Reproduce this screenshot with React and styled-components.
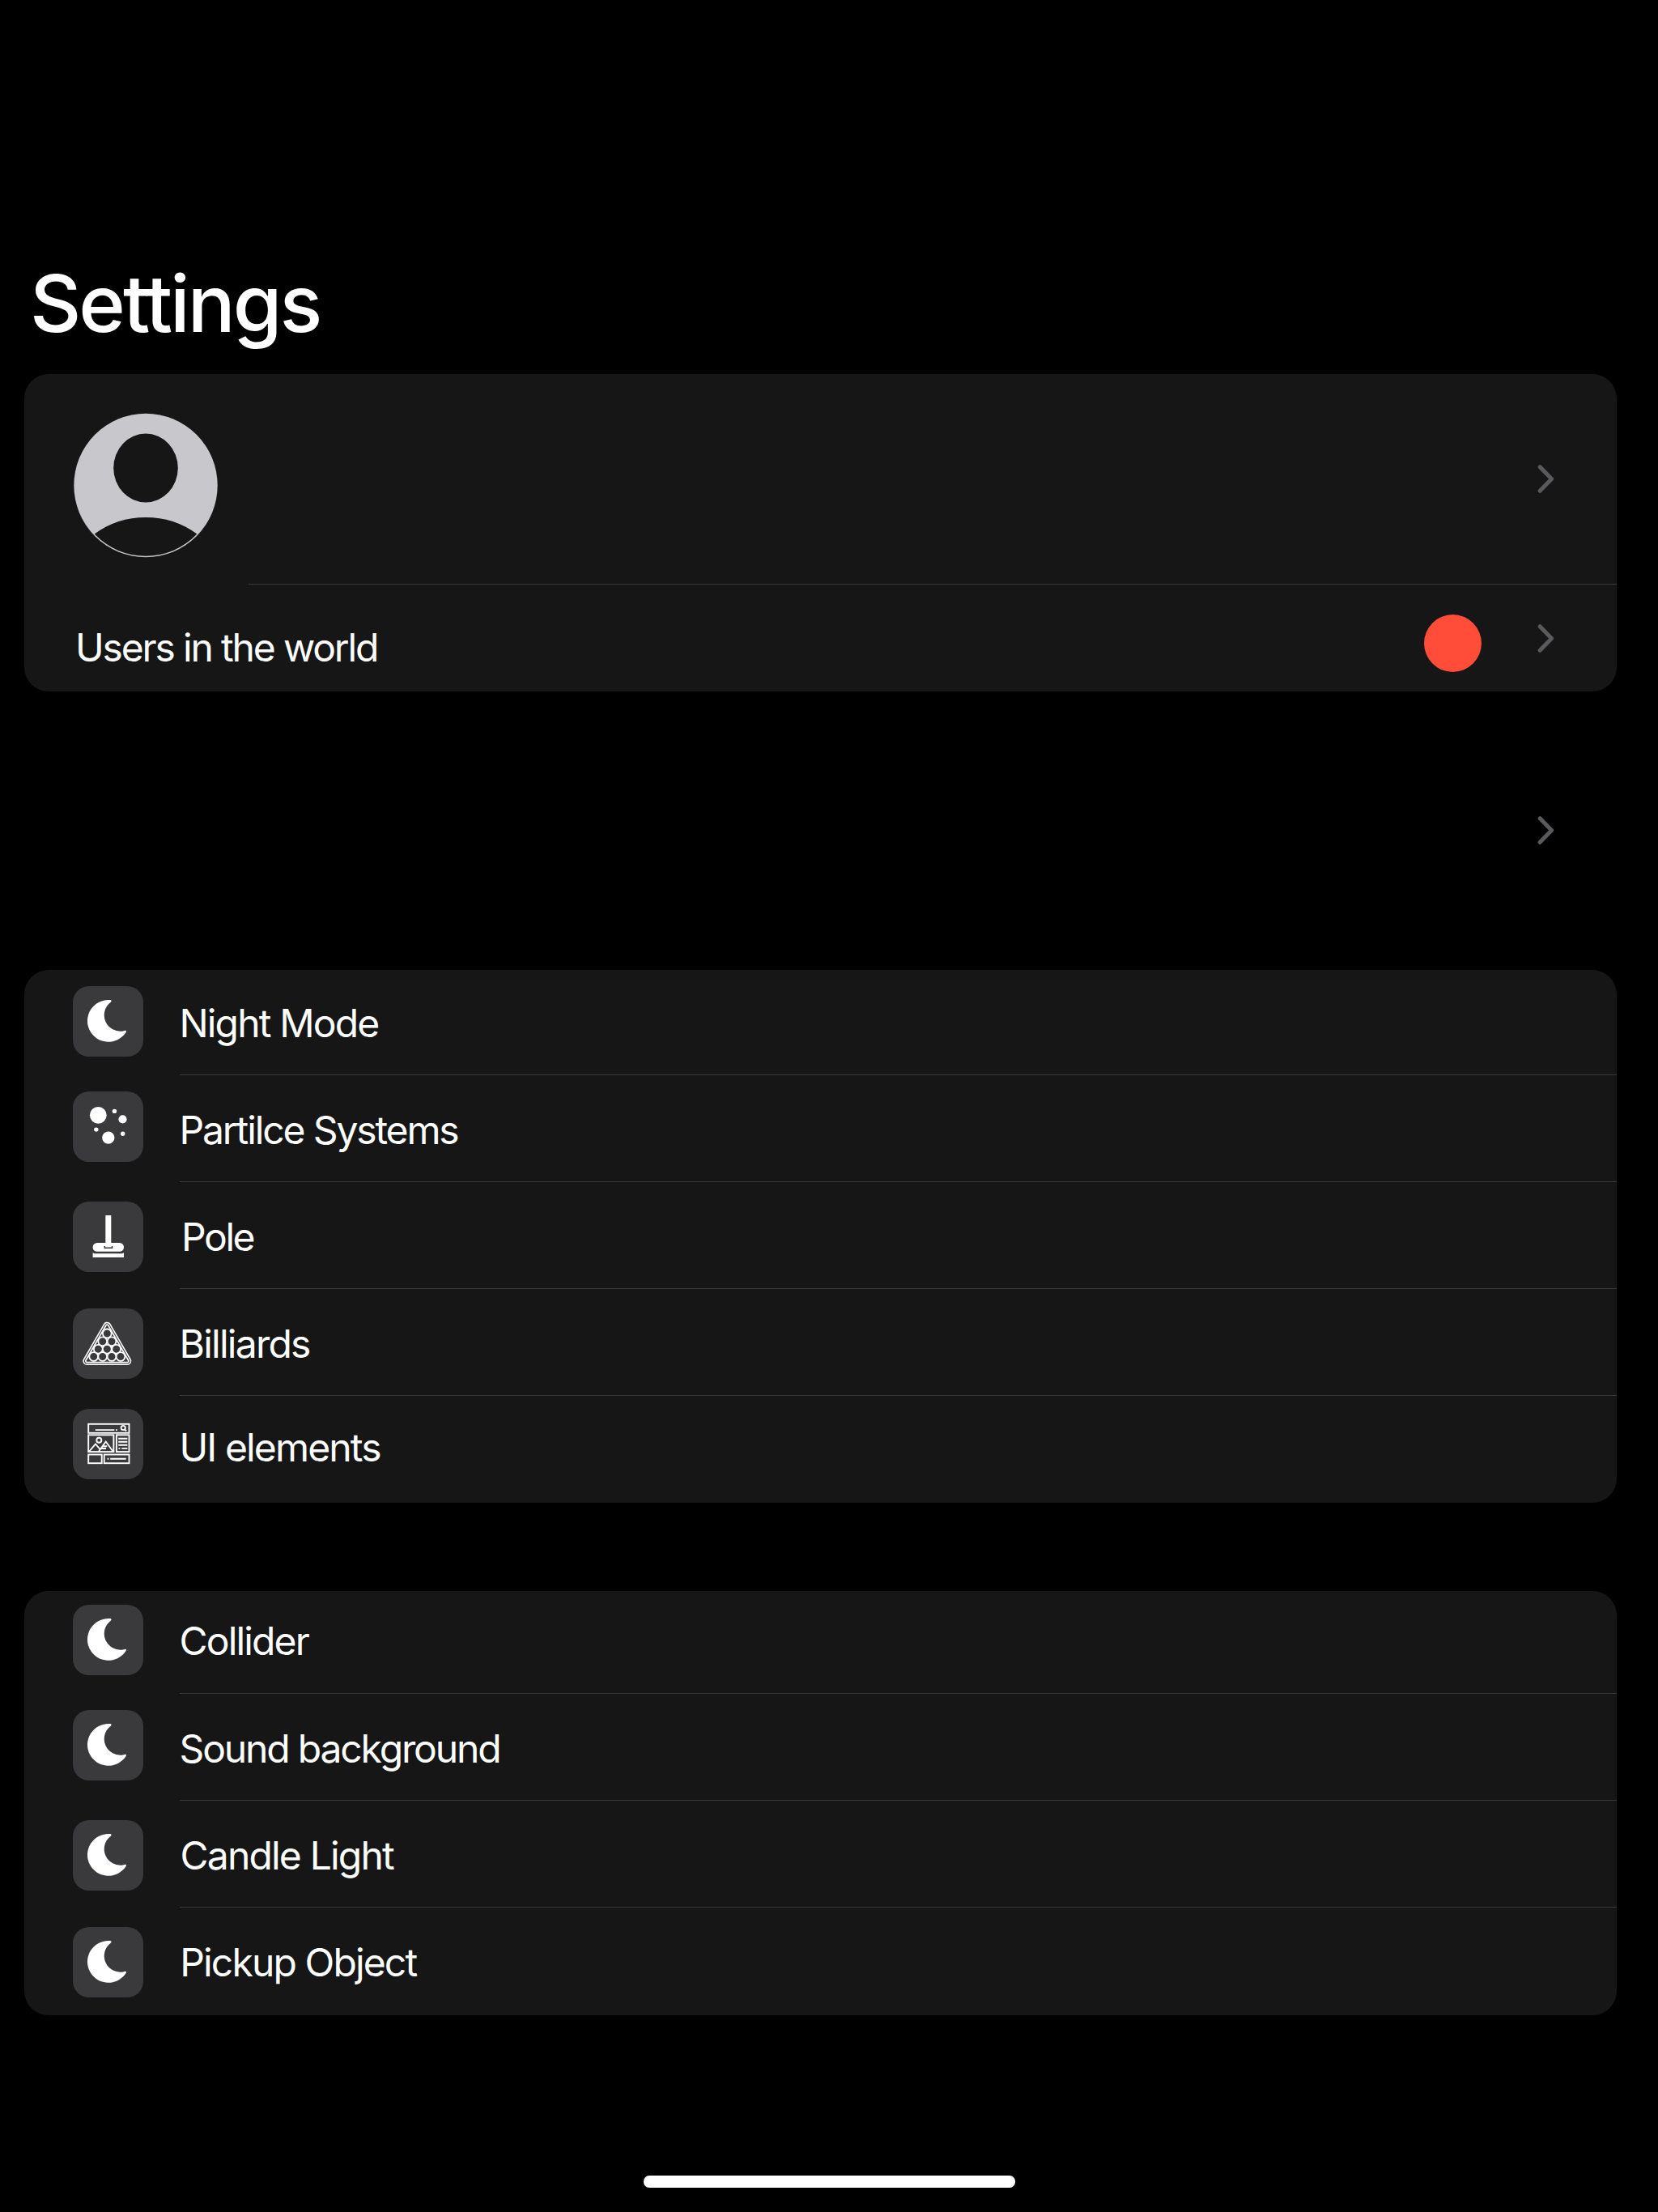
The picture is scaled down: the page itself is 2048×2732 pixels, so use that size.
import React from "react";
import styled, { createGlobalStyle } from "styled-components";

const colors = {
  page: "#000000",
  card: "#161616",
  tile: "#3a3a3c",
  divider: "#3a3a3b",
  chevron: "#5a5a5e",
  avatar: "#c8c7cc",
  badge: "#ff4d3a",
};

const GlobalStyle = createGlobalStyle`
  *, *::before, *::after { box-sizing: border-box; }
  body {
    margin: 0;
    background: ${colors.page};
    color: #ffffff;
    font-family: Inter, "Liberation Sans", sans-serif;
  }
`;

const Page = styled.main`
  width: 2048px;
  height: 2732px;
  padding: 320px 51px 30px 30px;
  display: flex;
  flex-direction: column;
  overflow: hidden;
  background: ${colors.page};
`;

const Title = styled.h1`
  margin: 0 0 22px;
  padding-left: 7px;
  height: 120px;
  font-size: 98px;
  line-height: 109px;
  font-weight: 530;
  letter-spacing: -2.95px;
`;

const Card = styled.section`
  flex: none;
  display: flex;
  flex-direction: column;
  border-radius: 30px;
  background: ${colors.card};
  margin-bottom: ${(p) => p.$after || 0}px;
`;

const ProfileRow = styled.div`
  display: flex;
  height: 260px;
`;

const AvatarSlot = styled.div`
  width: 277px;
  padding: 48px 0 0 61px;
`;

const ProfileBody = styled.div`
  flex: 1;
  display: flex;
  justify-content: flex-end;
  padding: 110px 72px 0 0;
  border-bottom: 1px solid ${colors.divider};
`;

const UsersRow = styled.div`
  display: flex;
  align-items: flex-start;
  height: 132px;
  padding: 37px 72px 0 63px;
`;

const UsersLabel = styled.span`
  flex: 1;
  padding-top: 11px;
  font-size: 48px;
  line-height: 60px;
  letter-spacing: -2.16px;
`;

const Badge = styled.span`
  width: 71px;
  height: 71px;
  margin-right: 64px;
  border-radius: 50%;
  background: ${colors.badge};
`;

const ChevronSlot = styled.span`
  display: flex;
  width: 31px;
  height: 39px;
  padding-left: 5px;
  margin-top: ${(p) => p.$top || 0}px;
`;

const LinkRow = styled.div`
  flex: none;
  display: flex;
  justify-content: flex-end;
  height: 344px;
  padding: 152px 72px 0 0;
`;

const Item = styled.div`
  display: flex;
  height: ${(p) => p.$height}px;
  padding-left: 60px;
`;

const Tile = styled.span`
  flex: none;
  width: 87px;
  height: 87px;
  margin: ${(p) => p.$top}px 45px 0 0;
  border-radius: 20px;
  background: ${colors.tile};
`;

const ItemBody = styled.div`
  flex: 1;
  padding-top: ${(p) => p.$top}px;
  border-bottom: ${(p) => (p.$last ? "none" : `1px solid ${colors.divider}`)};
`;

const ItemLabel = styled.span`
  display: block;
  margin-left: ${(p) => p.$shift}px;
  font-size: 48px;
  line-height: 60px;
  letter-spacing: ${(p) => p.$tracking}px;
  white-space: nowrap;
`;

const HomeArea = styled.footer`
  flex: 1;
  display: flex;
  align-items: flex-end;
  padding-left: 765px;
`;

const HomeBar = styled.div`
  width: 459px;
  height: 15px;
  border-radius: 7px;
  background: #ffffff;
`;

function Chevron({ top }) {
  return (
    <ChevronSlot $top={top}>
      <svg width="22" height="39" viewBox="0 0 22 39" fill="none">
        <path
          d="M3.2 4.7 17.6 19.5 3.2 34.3"
          stroke={colors.chevron}
          strokeWidth="5"
          strokeLinecap="round"
          strokeLinejoin="round"
        />
      </svg>
    </ChevronSlot>
  );
}

function Avatar() {
  return (
    <svg width="178" height="179" viewBox="0 0 178 179">
      <circle cx="89" cy="89.5" r="88.7" fill={colors.avatar} />
      <ellipse cx="89" cy="68" rx="39.8" ry="42.5" fill={colors.card} />
      <path
        d="M25.7 149.6C44 135.5 66 129 89 129s45 6.5 63.3 20.6A87.3 87.3 0 0 1 25.7 149.6Z"
        fill={colors.card}
      />
    </svg>
  );
}

const MoonIcon = () => (
  <path
    fill="#fff"
    d="M44.8 17C47.6 16.9 48.6 18 46.5 20A19.9 19.9 0 0 0 62 55.4C65.2 54.3 66.6 54.2 65.6 57A25.9 25.9 0 1 1 44.8 17Z"
  />
);

const ParticlesIcon = () => (
  <g fill="#fff">
    <circle cx="31.3" cy="29.3" r="10.4" />
    <circle cx="51.4" cy="24.4" r="2.7" />
    <circle cx="61.5" cy="34.4" r="5.1" />
    <circle cx="28.8" cy="47.1" r="2.7" />
    <circle cx="43.8" cy="57.1" r="7.7" />
    <circle cx="61.7" cy="52.2" r="2.7" />
  </g>
);

const PoleIcon = () => (
  <g>
    <rect x="40.3" y="17" width="7" height="36" rx="0.8" fill="#fff" />
    <rect x="24.6" y="51" width="38.4" height="10.8" rx="5.4" fill="#fff" />
    <path d="M24.6 63.2 26.6 64.2H61L63 63.2V69H24.6Z" fill="#fff" />
    <path d="M39.3 55v2.3h9.2V55" fill="none" stroke={colors.tile} strokeWidth="1.5" />
  </g>
);

const rack = "M42.3 21.7 67.3 65H17.3Z";
const balls = [
  [42.3, 31],
  [36.7, 40.7], [48, 40.7],
  [31.3, 50.2], [42.3, 50.2], [53.7, 50.2],
  [25.7, 59.5], [36.7, 59.5], [48, 59.5], [59, 59.5],
];

const BilliardsIcon = () => (
  <g strokeLinejoin="round">
    <path d={rack} fill="#fff" stroke="#fff" strokeWidth="10" />
    <path d={rack} fill={colors.tile} stroke={colors.tile} strokeWidth="6.8" />
    <path d={rack} fill={colors.tile} stroke="#fff" strokeWidth="4.8" />
    <path d={rack} fill={colors.tile} stroke={colors.tile} strokeWidth="1.4" />
    <path d="M39.6 26.4a3.6 3.6 0 0 1 5.4 0" fill="none" stroke="#fff" strokeWidth="1.4" />
    {balls.map(([x, y]) => (
      <circle key={`${x}-${y}`} cx={x} cy={y} r="5.4" fill={colors.tile} stroke="#fff" strokeWidth="1.8" />
    ))}
  </g>
);

const ElementsIcon = () => (
  <g fill="none" stroke="#fff" strokeWidth="1.9">
    <rect x="19.2" y="18.8" width="50.3" height="11" />
    <path d="M27.7 26.1H51.3M53 26.1h1.800" />
    <circle cx="62.2" cy="23.5" r="2.6" strokeWidth="1.9" />
    <path d="m64 25.3 2 2.2" strokeWidth="2" />
    <rect x="19.2" y="32.3" width="31.2" height="20.8" />
    <circle cx="32.3" cy="38.8" r="3" />
    <path d="M20.3 52.5 28 43.5 34 50.5M32 52.5 40.7 40.5 49.5 52.5M36.2 46.3h6M34.5 49h6.5" />
    <rect x="53.9" y="32.3" width="15.6" height="20.8" />
    <path d="M56.2 36.7H67.4M56.2 40.7H67.4M56.2 44.8H67.4M56.5 48.9h1.900M60.3 48.9h7.1" />
    <rect x="19.2" y="56.5" width="16.5" height="10.7" />
    <rect x="38.7" y="56.5" width="30.8" height="10.7" />
    <path d="M42.6 61.8h1.800M46.2 61.8H65.7" />
  </g>
);

const sceneItems = [
  { label: "Night Mode", Icon: MoonIcon, height: 130, iconTop: 20, textTop: 36, shift: -0.5, tracking: -1.85 },
  { label: "Partilce Systems", Icon: ParticlesIcon, height: 132, iconTop: 20, textTop: 38, shift: -0.5, tracking: -2.12 },
  { label: "Pole", Icon: PoleIcon, height: 132, iconTop: 24, textTop: 38, shift: 2, tracking: -2.4 },
  { label: "Billiards", Icon: BilliardsIcon, height: 132, iconTop: 24, textTop: 38, shift: -0.5, tracking: -1.74 },
  { label: "UI elements", Icon: ElementsIcon, height: 132, iconTop: 16, textTop: 34, shift: -0.5, tracking: -1.87 },
];

const objectItems = [
  { label: "Collider", Icon: MoonIcon, height: 127, iconTop: 17, textTop: 32, shift: -0.5, tracking: -1.85 },
  { label: "Sound background", Icon: MoonIcon, height: 132, iconTop: 20, textTop: 38, shift: -0.5, tracking: -2.15 },
  { label: "Candle Light", Icon: MoonIcon, height: 132, iconTop: 24, textTop: 38, shift: 0.5, tracking: -1.82 },
  { label: "Pickup Object", Icon: MoonIcon, height: 133, iconTop: 24, textTop: 38, shift: 0.3, tracking: -1.86 },
];

function ItemList({ items, after }) {
  return (
    <Card $after={after}>
      {items.map(({ label, Icon, height, iconTop, textTop, shift, tracking }, i) => (
        <Item key={label} $height={height}>
          <Tile $top={iconTop}>
            <svg width="87" height="87" viewBox="0 0 87 87">
              <Icon />
            </svg>
          </Tile>
          <ItemBody $top={textTop} $last={i === items.length - 1}>
            <ItemLabel $shift={shift} $tracking={tracking}>{label}</ItemLabel>
          </ItemBody>
        </Item>
      ))}
    </Card>
  );
}

export default function App() {
  return (
    <>
      <GlobalStyle />
      <Page>
        <Title>Settings</Title>
        <Card>
          <ProfileRow>
            <AvatarSlot>
              <Avatar />
            </AvatarSlot>
            <ProfileBody>
              <Chevron />
            </ProfileBody>
          </ProfileRow>
          <UsersRow>
            <UsersLabel>Users in the world</UsersLabel>
            <Badge />
            <Chevron top={10} />
          </UsersRow>
        </Card>
        <LinkRow>
          <Chevron />
        </LinkRow>
        <ItemList items={sceneItems} after={109} />
        <ItemList items={objectItems} />
        <HomeArea>
          <HomeBar />
        </HomeArea>
      </Page>
    </>
  );
}
